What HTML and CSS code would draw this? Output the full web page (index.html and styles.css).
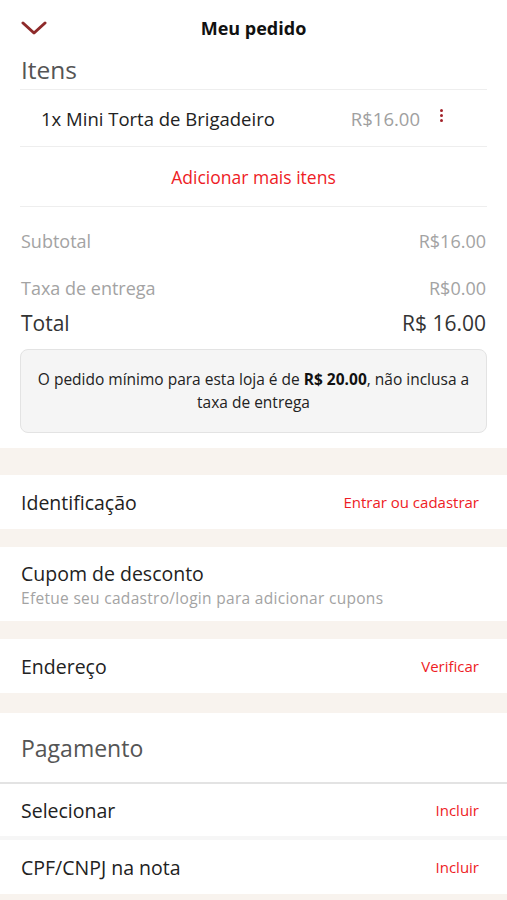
FILE: index.html
```html
<!DOCTYPE html>
<html lang="pt-BR">
<head>
<meta charset="utf-8">
<link rel="stylesheet" href="styles.css">
</head>
<body>
<header class="top">
  <svg class="chev" width="26" height="16" viewBox="0 0 26 16"><path d="M2 3 L13 13 L24 3" fill="none" stroke="#8e2a2a" stroke-width="3" stroke-linecap="round" stroke-linejoin="round"/></svg>
  <h1 class="title">Meu pedido</h1>
</header>
<section class="items">
  <h2 class="sec-title">Itens</h2>
  <div class="item">
    <span class="item-name">1x Mini Torta de Brigadeiro</span>
    <span class="item-price">R$16.00</span>
    <span class="kebab"><i></i><i></i><i></i></span>
  </div>
  <div class="add">Adicionar mais itens</div>
  <div class="sum-row muted first"><span>Subtotal</span><span>R$16.00</span></div>
  <div class="sum-row muted"><span>Taxa de entrega</span><span>R$0.00</span></div>
  <div class="sum-row total"><span>Total</span><span>R$ 16.00</span></div>
  <div class="notice"><p>O pedido mínimo para esta loja é de <b>R$ 20.00</b>, não inclusa a taxa de entrega</p></div>
</section>
<div class="band b1"></div>
<div class="row"><span class="label">Identificação</span><span class="link">Entrar ou cadastrar</span></div>
<div class="band b2"></div>
<div class="row coupon">
  <span class="label">Cupom de desconto</span>
  <span class="hint">Efetue seu cadastro/login para adicionar cupons</span>
</div>
<div class="band b2"></div>
<div class="row"><span class="label">Endereço</span><span class="link">Verificar</span></div>
<div class="band b3"></div>
<div class="pay-title">Pagamento</div>
<div class="row pay"><span class="label">Selecionar</span><span class="link">Incluir</span></div>
<div class="thin"></div>
<div class="row"><span class="label">CPF/CNPJ na nota</span><span class="link">Incluir</span></div>
<div class="band"></div>
</body>
</html>
```
FILE: styles.css
```css
* { box-sizing: border-box; margin: 0; padding: 0; }
body {
  font-family: "Open Sans", "Noto Sans", sans-serif;
  color: #222;
  background: #fff;
  width: 507px;
}
.top {
  height: 56px;
  display: flex;
  align-items: center;
  justify-content: center;
  position: relative;
}
.chev { position: absolute; left: 21px; top: 20px; }
.title { font-size: 18px; font-weight: 700; color: #111; letter-spacing: 0; }
.items { padding: 0 20px; }
.sec-title {
  font-size: 24.5px;
  font-weight: 400;
  color: #555;
  height: 35px;
  line-height: 30px;
  padding-left: 1px;
  margin-top: -1px;
  border-bottom: 1px solid #eeeeee;
}
.item {
  height: 57px;
  display: flex;
  align-items: center;
  padding-left: 21px;
  border-bottom: 1px solid #eeeeee;
  font-size: 18.5px;
}
.item-name { flex: 1; color: #222; }
.item-price { color: #a0a0a0; }
.kebab {
  display: flex; flex-direction: column; gap: 2px;
  width: 3px; margin-left: 20px; margin-right: 44px; margin-top: -6px;
}
.kebab i { display: block; width: 3px; height: 3px; background: #a3232b; border-radius: 50%; }
.add {
  height: 60px;
  display: flex; align-items: center; justify-content: center;
  color: #ee1c25;
  font-size: 17.5px;
  border-bottom: 1px solid #eeeeee;
}
.sum-row {
  display: flex; justify-content: space-between; align-items: center;
  padding: 0 1px;
}
.sum-row.muted { color: #a3a3a3; font-size: 18px; height: 47px; }
.sum-row.first { margin-top: 10px; }
.sum-row.total { color: #333; font-size: 21px; height: 26px; margin-top: -1px; }
.notice {
  margin: 13px 0 15px;
  background: #f5f5f5;
  border: 1px solid #e3e3e3;
  border-radius: 8px;
  height: 84px;
  padding: 0 3px;
  display: flex; align-items: center; justify-content: center;
  text-align: center;
  font-size: 15.5px;
  line-height: 23px;
  color: #222;
}
.notice p { display: block; }
.notice b { font-weight: 700; color: #111; }
.band { height: 27px; background: #f8f3ee; }
.b2 { height: 18px; }
.b3 { height: 20px; }
.row {
  display: flex; justify-content: space-between; align-items: center;
  height: 54px;
  padding: 0 28px 0 21px;
}
.label { font-size: 19.5px; color: #222; }
.link { font-size: 15px; color: #ee1c25; }
.row.coupon {
  flex-direction: column; align-items: flex-start; justify-content: center;
  height: 74px; gap: 0;
}
.row.pay { height: 52px; }
.hint { font-size: 15.5px; color: #a3a3a3; letter-spacing: 0.3px; }
.pay-title {
  height: 71px;
  display: flex; align-items: center;
  padding-left: 21px;
  font-size: 23px;
  color: #555;
  border-bottom: 2px solid #e3e3e3;
}
.thin { height: 4px; background: #f6f6f6; }
```
